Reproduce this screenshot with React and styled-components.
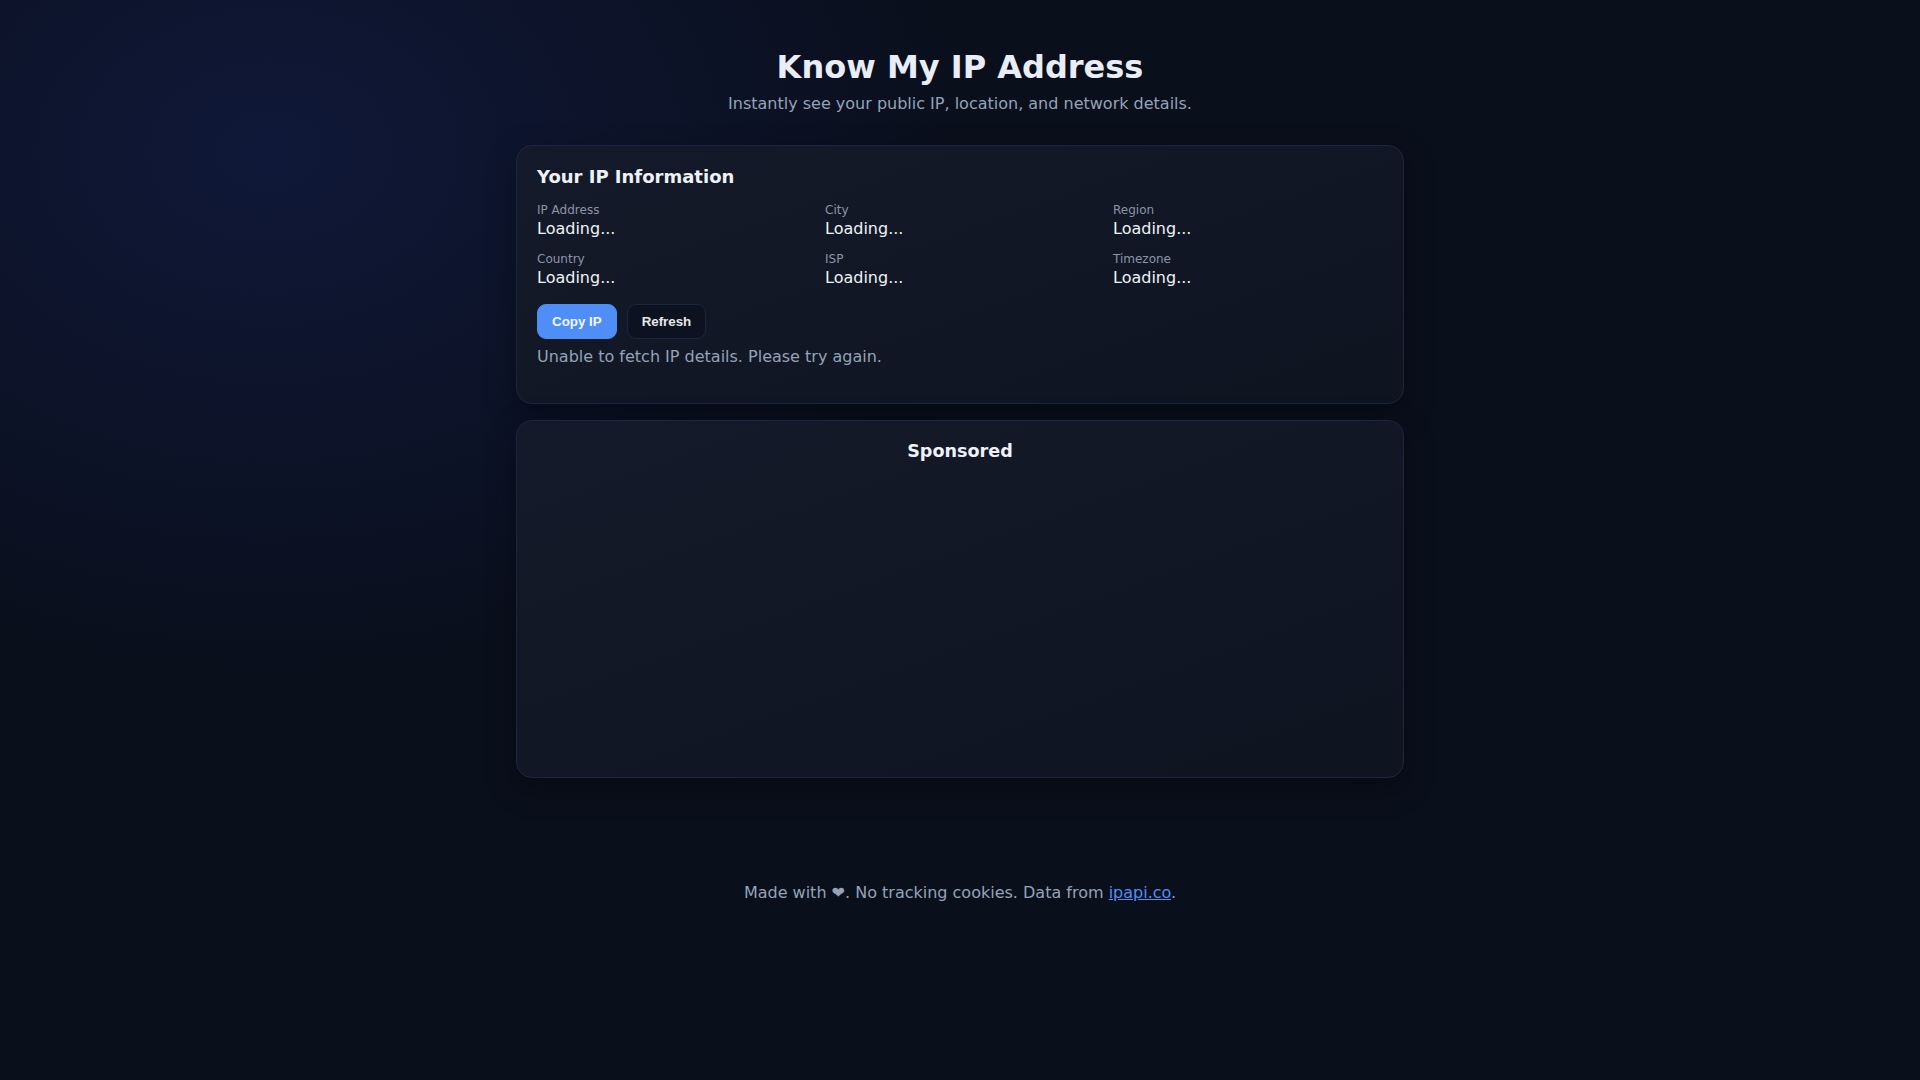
import styled, { createGlobalStyle } from "styled-components";

const GlobalStyle = createGlobalStyle`
  html, body {
    margin: 0;
    padding: 0;
  }
  body {
    min-height: 100vh;
    font-family: "DejaVu Sans", Verdana, sans-serif;
    color: #e5e7eb;
    background:
      radial-gradient(1000px 750px at 14% 14%, #0f1838 0%, rgba(15, 24, 56, 0) 70%),
      #0a0f1c;
  }
`;

const Page = styled.main`
  display: flex;
  flex-direction: column;
  align-items: center;
  padding: 48px 16px 0;
`;

const Header = styled.header`
  text-align: center;
  margin-bottom: 32px;
  h1 {
    margin: 0 0 8px;
    font-size: 32px;
    font-weight: 700;
    color: #e8edf7;
  }
  p {
    margin: 0;
    font-size: 16px;
    color: #94a3b8;
  }
`;

const Card = styled.section`
  box-sizing: border-box;
  width: 888px;
  padding: 20px;
  margin-bottom: 16px;
  border: 1px solid #1d2640;
  border-radius: 16px;
  background: linear-gradient(160deg, #141a29 0%, #0f1421 100%);
  box-shadow: 0 10px 30px rgba(0, 0, 0, 0.35);
  min-height: ${(p) => p.$minHeight || "auto"};
  text-align: ${(p) => (p.$center ? "center" : "left")};
`;

const CardTitle = styled.h2`
  margin: 0 0 15.5px;
  font-size: ${(p) => p.$size || "18px"};
  font-weight: 700;
  color: #eef2f8;
`;

const InfoGrid = styled.div`
  display: grid;
  grid-template-columns: repeat(3, 1fr);
  column-gap: 18px;
  row-gap: 14px;
`;

const Field = styled.div`
  display: flex;
  flex-direction: column;
  gap: 2px;
`;

const Label = styled.span`
  font-size: 12px;
  color: #8b95a7;
`;

const Value = styled.span`
  font-size: 16px;
  color: #eef2f8;
`;

const Actions = styled.div`
  display: flex;
  gap: 10px;
  margin-top: 17px;
`;

const Button = styled.button`
  height: 35px;
  padding: 0 14px;
  border-radius: 9px;
  font-family: "Liberation Sans", Arial, sans-serif;
  font-size: 13.33px;
  font-weight: 700;
  cursor: pointer;
  color: ${(p) => (p.$primary ? "#f4f7ff" : "#e5e7eb")};
  background: ${(p) => (p.$primary ? "#4f8ef7" : "#0d1220")};
  border: 1px solid ${(p) => (p.$primary ? "#4f8ef7" : "#1d2640")};
`;

const Status = styled.p`
  margin: 8px 0 17px;
  font-size: 16px;
  color: #94a3b8;
`;

const Footer = styled.footer`
  margin-top: 89px;
  font-size: 16px;
  color: #94a3b8;
  text-align: center;
  a {
    color: #4f8ef7;
  }
`;

const fields = [
  "IP Address",
  "City",
  "Region",
  "Country",
  "ISP",
  "Timezone",
];

export default function App() {
  return (
    <>
      <GlobalStyle />
      <Page>
        <Header>
          <h1>Know My IP Address</h1>
          <p>Instantly see your public IP, location, and network details.</p>
        </Header>

        <Card>
          <CardTitle>Your IP Information</CardTitle>
          <InfoGrid>
            {fields.map((f) => (
              <Field key={f}>
                <Label>{f}</Label>
                <Value>Loading...</Value>
              </Field>
            ))}
          </InfoGrid>
          <Actions>
            <Button $primary>Copy IP</Button>
            <Button>Refresh</Button>
          </Actions>
          <Status>Unable to fetch IP details. Please try again.</Status>
        </Card>

        <Card $center $minHeight="358px">
          <CardTitle $size="17.6px">Sponsored</CardTitle>
        </Card>

        <Footer>
          Made with ❤. No tracking cookies. Data from{" "}
          <a href="#">ipapi.co</a>.
        </Footer>
      </Page>
    </>
  );
}
